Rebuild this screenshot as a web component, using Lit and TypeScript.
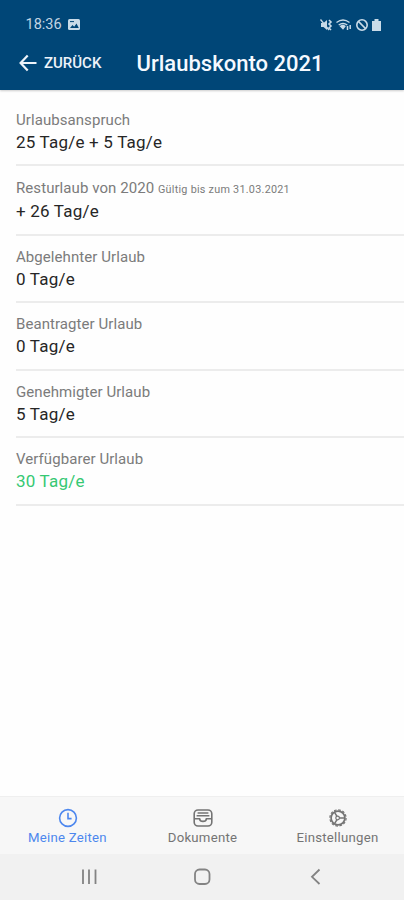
import { LitElement, html, css, svg } from "lit";
import { customElement } from "lit/decorators.js";

interface Row { label: string; value: string; note?: string; kind: string; }

const rows: Row[] = [
  { label: "Urlaubsanspruch", value: "25 Tag/e + 5 Tag/e", kind: "first" },
  { label: "Resturlaub von 2020", note: "Gültig bis zum 31.03.2021", value: "+ 26 Tag/e", kind: "tall" },
  { label: "Abgelehnter Urlaub", value: "0 Tag/e", kind: "" },
  { label: "Beantragter Urlaub", value: "0 Tag/e", kind: "" },
  { label: "Genehmigter Urlaub", value: "5 Tag/e", kind: "" },
  { label: "Verfügbarer Urlaub", value: "30 Tag/e", kind: "green" },
];

const clock = svg`<circle cx="10" cy="10" r="8.4"/><path d="M10 4.8V10.6H13.6"/>`;
const tray = svg`<rect x="1.2" y="2" width="17.6" height="16" rx="3.8"/><path d="M4.6 5H15.4M3.6 7.8H16.4M1.4 10.8H6.6C7 14.2 13 14.2 13.4 10.8H18.6"/>`;
const gear = svg`<circle cx="10" cy="10" r="6.9" stroke-width="1.7"/><circle cx="10" cy="10" r="8.1" stroke-width="1.2" stroke-dasharray="2.6 1.64"/><path d="M11 10H17M9 8.4L6.4 4.2M9 11.6L6.4 15.8" stroke-width="1.5"/><circle cx="9.6" cy="10" r="1.8" stroke-width="1.2"/>`;

const tabs = [
  { label: "Meine Zeiten", icon: clock, cls: "tab active" },
  { label: "Dokumente", icon: tray, cls: "tab" },
  { label: "Einstellungen", icon: gear, cls: "tab" },
];

@customElement("app-root")
export class AppRoot extends LitElement {
  static styles = css`
    :host { display: flex; flex-direction: column; height: 900px; width: 100%; background: #fefefe; font-family: Roboto, "Liberation Sans", sans-serif; overflow: hidden; }
    * { box-sizing: border-box; }
    svg { display: block; flex: none; }
    header { height: 90px; background: #004677; color: #fff; box-shadow: 0 1px 2px #0003; flex: none; }
    .status { height: 36px; padding: 13px 21px 0 25.5px; display: flex; align-items: center; color: #c3d5e3; font-size: 14.5px; }
    .status .pic { margin-left: 5px; }
    .signals { margin-left: auto; display: flex; }
    .bar { display: flex; height: 54px; align-items: center; padding-left: 19px; }
    .back { width: 117.5px; display: flex; align-items: center; gap: 7px; font-size: 15px; font-weight: 500; color: #edf3fa; }
    h1 { margin: 0; font-size: 22px; font-weight: 500; letter-spacing: .02px; color: #f5f9ff; }
    main { flex: 1; padding-left: 16px; }
    .row { height: 67.5px; border-bottom: 2px solid #ececec; padding-top: 11px; }
    .first { height: 75.5px; padding-top: 20px; }
    .tall { height: 70px; padding-top: 12px; }
    .label { font-size: 15px; line-height: 20px; letter-spacing: .07px; color: #7b7b7b; white-space: nowrap; }
    .note { font-size: 10.8px; line-height: 1; letter-spacing: .26px; }
    .value { font-size: 17px; line-height: 24px; letter-spacing: .2px; color: #262626; }
    .tall .label { height: 21px; }
    .green .value { color: #36c873; }
    nav { height: 58px; background: #f7f7f7; border-top: 1px solid #efefef; display: grid; grid-template-columns: repeat(3, 135px); flex: none; }
    .tab { display: flex; flex-direction: column; align-items: center; padding-top: 11px; color: #747474; font-size: 13.2px; line-height: 20px; letter-spacing: .25px; }
    .active { color: #4d87ee; }
    .system { height: 46px; background: #f1f1f1; flex: none; color: #838383; display: flex; align-items: center; }
    .system svg { width: 100%; height: 46px; }
  `;

  render() {
    return html`
      <header>
        <div class="status">
          <span>18:36</span>
          <svg class="pic" width="14" height="13" viewBox="0 0 14 13"><rect x="1" y="1" width="12" height="11" rx="1.5" fill="#c9dbe8"/><path d="M3 10L5.5 7L7.2 8.8L9.5 5.5L11.8 10Z" fill="#004677"/><path d="M3 3.6H7" stroke="#004677"/></svg>
          <svg class="signals" width="64" height="14" viewBox="0 0 64 14" fill="none" stroke="#c9dbe8" stroke-width="1.3">
            <path d="M2 5H4.5L8 2V12L4.5 9H2Z" fill="#c9dbe8" stroke="none"/><path d="M1.5 1.5L10 12"/><path d="M10 2L12 4L10 6L12 8L10 10L12 12" stroke-width="1.6"/>
            <path d="M17.5 4.5Q24 -.5 30.5 4.5M19.7 7Q24 4 28.3 7"/><path d="M21.5 8.2Q24 6.8 26 8.2L24 10.7Z" fill="#c9dbe8"/><path d="M28.5 8V12M31.2 7V11" stroke-width="1.5"/>
            <circle cx="43" cy="7" r="5.2" stroke-width="1.6"/><path d="M39.4 3.4L46.6 10.6" stroke-width="1.5"/>
            <path d="M53 3H55.5V1H59.5V3H62V13H53Z" fill="#c9dbe8" stroke="none"/>
          </svg>
        </div>
        <div class="bar">
          <div class="back">
            <svg width="18" height="18" viewBox="0 0 18 18" fill="none" stroke="currentColor" stroke-width="2.2"><path d="M8.7 1.5L1.6 9L8.7 16.5M2 9H17.5"/></svg>
            <span>ZURÜCK</span>
          </div>
          <h1>Urlaubskonto 2021</h1>
        </div>
      </header>
      <main>
        ${rows.map((r) => html`<div class="row ${r.kind}">
          <div class="label">${r.label}${r.note ? html` <span class="note">${r.note}</span>` : ""}</div>
          <div class="value">${r.value}</div>
        </div>`)}
      </main>
      <nav>
        ${tabs.map((t) => html`<div class=${t.cls}>
          <svg width="20" height="20" viewBox="0 0 20 20" fill="none" stroke="currentColor" stroke-width="1.6">${t.icon}</svg>
          <span>${t.label}</span>
        </div>`)}
      </nav>
      <div class="system">
        <svg viewBox="0 0 404 46" fill="none" stroke="currentColor" stroke-width="1.8">
          <path d="M83 15.5V30M89 15.5V30M95.5 15.5V30"/>
          <rect x="195" y="15.5" width="14.5" height="14.5" rx="4.5"/>
          <path d="M319.5 15.5L312 22.8L319.5 30"/>
        </svg>
      </div>
    `;
  }
}
